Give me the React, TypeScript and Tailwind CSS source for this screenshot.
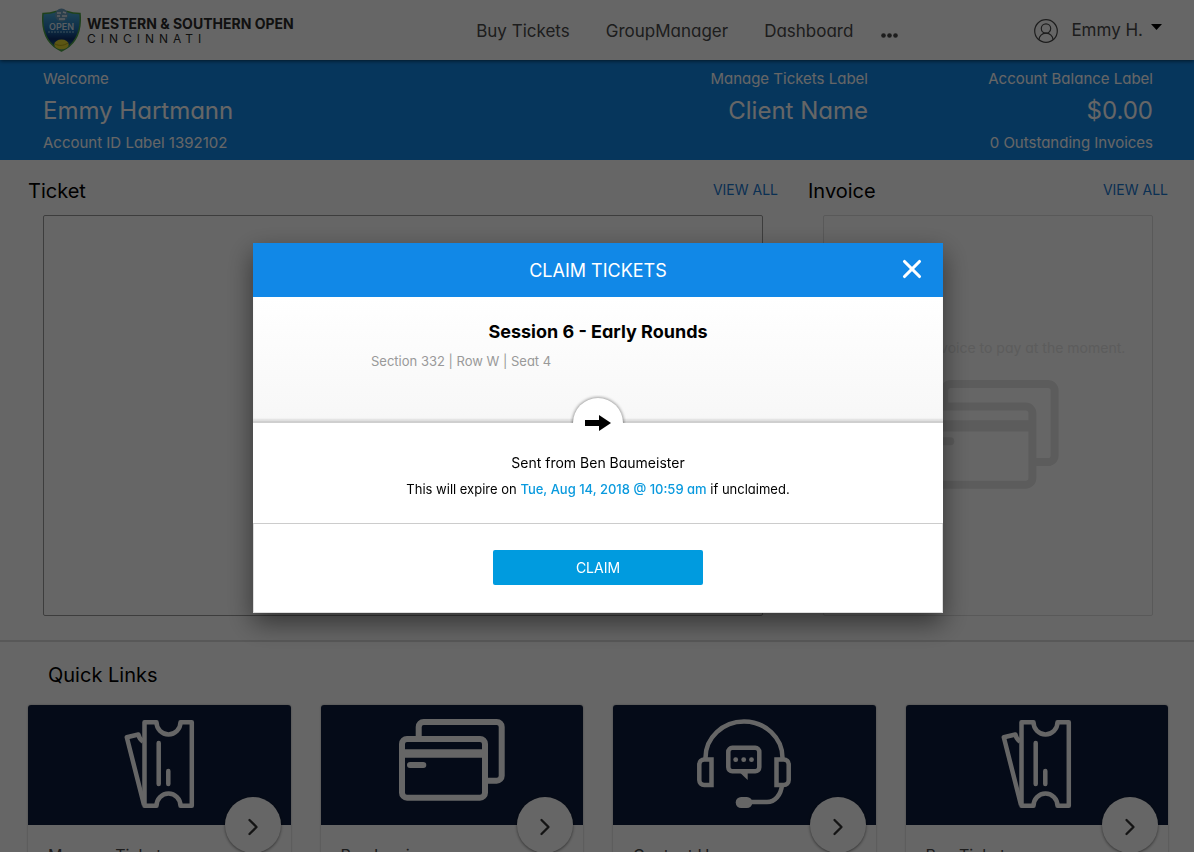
import { X, ChevronRight } from 'lucide-react';

interface QuickLink {
  title: string;
  icon: 'tickets' | 'cards' | 'headset';
}

const navItems = ['Buy Tickets', 'GroupManager', 'Dashboard'];

const quickLinks: QuickLink[] = [
  { title: 'Manage Tickets', icon: 'tickets' },
  { title: 'Pay Invoice', icon: 'cards' },
  { title: 'Contact Us', icon: 'headset' },
  { title: 'Buy Tickets', icon: 'tickets' },
];

const TicketsIcon = () => (
  <svg width="71" height="90" viewBox="0 0 71 90" fill="none" stroke="currentColor" strokeWidth="4.5" strokeLinejoin="round">
    <path d="M20.5 3.3H32.5a12 12.2 0 0 0 24 0H67.8V86.8H56.5a12 12.2 0 0 0-24 0H20.5Z" />
    <path d="M19 22.5c-2.3-1.5-4-4-4.6-7L2.8 18.2 20 86" />
    <path d="M34.7 24V65M44.3 52V65" strokeLinecap="round" />
  </svg>
);

const CardsIcon = ({ className = 'w-[106px]' }: { className?: string }) => (
  <svg className={className} viewBox="0 0 106 82" fill="none" stroke="currentColor" strokeWidth="6">
    <path d="M19.7 18V8a5 5 0 0 1 5-5H97.7a5 5 0 0 1 5 5V56.7a5 5 0 0 1-5 5H88" />
    <rect x="3" y="20" width="83" height="58.7" rx="5" />
    <path d="M3 34.5H86" strokeWidth="8.5" />
    <path d="M11 46H24.3" strokeLinecap="round" />
  </svg>
);

const HeadsetIcon = () => (
  <svg width="94" height="90" viewBox="0 0 94 90" fill="none" stroke="currentColor" strokeWidth="4.5">
    <path d="M8.5 39.5V38.7a38.5 36.2 0 0 1 77 0V39.5" />
    <path d="M14.5 40.5H7.3a5 5 0 0 0-5 5V61a5 5 0 0 0 5 5H14.5Z" />
    <path d="M79.5 40.5H86.7a5 5 0 0 1 5 5V61a5 5 0 0 1-5 5H79.5Z" />
    <rect x="31.3" y="28.8" width="31" height="23.5" rx="4" />
    <path d="M43.3 54H50.7V61Z" fill="currentColor" stroke="none" />
    <path d="M85 66C84 76 78 83 70 83H54" />
    <rect x="38.7" y="78" width="16.6" height="11" rx="5.5" fill="currentColor" stroke="none" />
    <g fill="currentColor" stroke="none">
      <circle cx="38.7" cy="40.7" r="2.4" />
      <circle cx="46.7" cy="40.7" r="2.4" />
      <circle cx="54.5" cy="40.7" r="2.4" />
    </g>
  </svg>
);

const icons = { tickets: TicketsIcon, cards: CardsIcon, headset: HeadsetIcon };

const Logo = () => (
  <a href="#" className="flex items-center gap-[6px]" aria-label="Western & Southern Open Cincinnati">
    <svg width="39" height="44" viewBox="0 0 39 44">
      <defs>
        <linearGradient id="shield" x1="0" y1="0" x2="0" y2="1">
          <stop offset="0" stopColor="#4fb0dc" />
          <stop offset="0.45" stopColor="#2272b4" />
          <stop offset="0.7" stopColor="#0c2f6c" />
          <stop offset="1" stopColor="#2c86a8" />
        </linearGradient>
      </defs>
      <path d="M1 5.5C6 5.5 10 5 14 3.5H25C29 5 33 5.5 38 5.5C39.5 22 35 36 19.5 43C4 36-.5 22 1 5.5Z" fill="url(#shield)" stroke="#4da348" strokeWidth="1.5" />
      <circle cx="19.5" cy="7" r="6.5" fill="#6c9dbd" />
      <path d="M15 5h4M21 4l3 1M15 8h3M20 8h5M17 11h6" stroke="#e5eef4" strokeWidth="1.5" />
      <text x="19.5" y="21.5" textAnchor="middle" fontSize="9" fontWeight="600" fill="#dbe8f2">OPEN</text>
      <path d="M6 24h27" stroke="#6ea6cc" strokeWidth="1.3" strokeDasharray="2 1" />
      <ellipse cx="19.5" cy="36.5" rx="7.2" ry="5" fill="#e3d634" />
      <path d="M13 36c4 2 8 2 13-1" stroke="#b3a717" fill="none" />
    </svg>
    <span className="flex flex-col pt-[2px] text-[#2b2b2b]">
      <span className="text-[14px] leading-[15px] font-bold">WESTERN &amp; SOUTHERN OPEN</span>
      <span className="text-[12px] leading-[15px] tracking-[5px]">CINCINNATI</span>
    </span>
  </a>
);

const Header = () => (
  <header className="relative z-10 flex h-[60px] items-center bg-white pr-8 pl-[42px] shadow-[0_1px_4px_rgba(0,0,0,0.6)]">
    <Logo />
    <nav className="mr-[136px] ml-auto flex items-center gap-9 pt-[3px] text-[17px] text-[#4a4a4a]">
      {navItems.map((item) => (
        <a key={item} href="#">{item}</a>
      ))}
      <button type="button" aria-label="More" className="-ml-2 pt-2">
        <svg width="17" height="5" viewBox="0 0 17 5" fill="currentColor">
          <circle cx="2.5" cy="2.5" r="2.3" />
          <circle cx="8.5" cy="2.5" r="2.3" />
          <circle cx="14.5" cy="2.5" r="2.3" />
        </svg>
      </button>
    </nav>
    <button type="button" className="flex items-center pt-[2px] text-[17px] text-[#4a4a4a]">
      <svg width="24" height="24" viewBox="0 0 24 24" fill="none" stroke="currentColor" strokeWidth="1.2" className="mr-[13px]">
        <circle cx="12" cy="12" r="11.3" />
        <circle cx="12" cy="9.5" r="4.7" />
        <path d="M5 20.8c0-3.8 3-6.6 7-6.6s7 2.8 7 6.6" />
      </svg>
      Emmy H.
      <svg width="11" height="6" viewBox="0 0 11 6" className="mb-2 ml-2 text-black">
        <path d="M0 0h11L5.5 6z" fill="currentColor" />
      </svg>
    </button>
  </header>
);

const AccountBar = () => (
  <section className="flex bg-[#1188e7] pt-[7px] pr-[41px] pb-[5px] pl-[43px] text-[15px] leading-6 text-white">
    <div className="flex-1">
      <p>Welcome</p>
      <p className="text-[24px] leading-10">Emmy Hartmann</p>
      <p>Account ID Label 1392102</p>
    </div>
    <div className="text-right">
      <p>Manage Tickets Label</p>
      <p className="text-[24px] leading-10">Client Name</p>
    </div>
    <div className="w-[285px] text-right">
      <p>Account Balance Label</p>
      <p className="text-[24px] leading-10">$0.00</p>
      <p>0 Outstanding Invoices</p>
    </div>
  </section>
);

const PanelHeading = ({ title }: { title: string }) => (
  <div className="flex items-start justify-between">
    <h2 className="text-[20px] leading-[30px]">{title}</h2>
    <a href="#" className="text-[14px] leading-7 text-[#1a78d0]">VIEW ALL</a>
  </div>
);

const ClaimModal = () => (
  <div className="fixed inset-0 z-20 flex items-center justify-center bg-black/60 pt-1 pl-[2px]">
    <div role="dialog" aria-modal="true" aria-labelledby="claim-title" className="w-full max-w-[690px] bg-white text-center shadow-[0_10px_25px_rgba(0,0,0,0.5)]">
      <div className="relative bg-[#1188e7] pt-[2px] text-white">
        <h2 id="claim-title" className="text-[18px] leading-[52px]">CLAIM TICKETS</h2>
        <button type="button" aria-label="Close" className="absolute top-[11px] right-4">
          <X className="h-[30px] w-[30px]" strokeWidth={2.5} />
        </button>
      </div>
      <div className="relative h-[126px] border-b-2 border-[#cfcfcf] bg-gradient-to-b from-white to-[#f7f7f7] px-[118px] pt-5 shadow-[inset_0_-2px_2px_rgba(0,0,0,0.1)]">
        <h3 className="text-[18px] leading-[30px] font-bold">Session 6 - Early Rounds</h3>
        <p className="text-left text-[13px] leading-7 text-[#999]">Section 332 | Row W | Seat 4</p>
        <div className="absolute -bottom-[2px] left-1/2 h-[28px] w-[56px] -translate-x-1/2 overflow-hidden">
          <div className="mx-auto mt-[3px] h-[50px] w-[50px] rounded-full bg-white shadow-[0_0_3px_1px_rgba(0,0,0,0.35)]" />
        </div>
        <svg width="26" height="16" viewBox="0 0 26 16" className="absolute -bottom-[10px] left-1/2 -translate-x-1/2">
          <path d="M0 5h14V0l12 8-12 8v-5H0z" fill="#000" />
        </svg>
      </div>
      <div className="border-b border-[#ccc] pt-[26px] pb-5 leading-[27px]">
        <p className="text-[14px]">Sent from Ben Baumeister</p>
        <p className="text-[13px]">
          This will expire on <span className="font-medium text-[#0a9ade]">Tue, Aug 14, 2018 @ 10:59 am</span> if unclaimed.
        </p>
      </div>
      <div className="border border-t-0 border-[#ddd] pt-[26px] pb-[27px]">
        <button type="button" className="h-[35px] w-[210px] rounded-[2px] bg-[#009bdf] text-[14px] text-white">
          CLAIM
        </button>
      </div>
    </div>
  </div>
);

const App = () => {
  return (
    <div className="h-screen overflow-hidden bg-white font-['Inter','Open_Sans',sans-serif] text-black [font-feature-settings:'cv11']">
      <Header />
      <AccountBar />
      <main>
        <div className="grid grid-cols-12 gap-[30px] pt-4 pr-[26px] pb-6 pl-7">
          <section className="col-span-8">
            <PanelHeading title="Ticket" />
            <div className="mx-[15px] mt-[9px] h-[401px] rounded-[2px] border border-[#9a9a9a]" />
          </section>
          <section className="col-span-4">
            <PanelHeading title="Invoice" />
            <div className="mx-[15px] mt-[9px] flex h-[401px] flex-col items-center rounded-[2px] border border-[#dedede] pt-[120px] text-[#e6e6e6]">
              <p className="text-[14px] leading-6 whitespace-nowrap">There is no invoice to pay at the moment.</p>
              <CardsIcon className="mt-5 w-[141px]" />
            </div>
          </section>
        </div>
        <section className="border-t-2 border-[#dcdcdc] pt-[18px] pr-[26px] pl-7">
          <h2 className="pl-5 text-[20px] leading-[30px]">Quick Links</h2>
          <div className="mt-[15px] grid grid-cols-4 gap-[30px]">
            {quickLinks.map((link, i) => {
              const Icon = icons[link.icon];
              return (
                <a key={i} href="#" className="block rounded-[3px] shadow-[0_0_2px_rgba(0,0,0,0.35)]">
                  <div className="relative flex h-[120px] items-start justify-center rounded-t-[3px] bg-[#0e1d3c] pt-[14px] text-white">
                    <Icon />
                    <span className="absolute right-[10px] -bottom-7 flex h-14 w-14 items-center justify-center rounded-full bg-white text-[#333] shadow-[0_1px_3px_rgba(0,0,0,0.5)]">
                      <ChevronRight className="mt-1 h-7 w-7" strokeWidth={2} />
                    </span>
                  </div>
                  <p className="px-5 pt-[18px] pb-8 text-[16px] leading-6 text-[#4a4a4a]">{link.title}</p>
                </a>
              );
            })}
          </div>
        </section>
      </main>
      <ClaimModal />
    </div>
  );
};

export default App;
